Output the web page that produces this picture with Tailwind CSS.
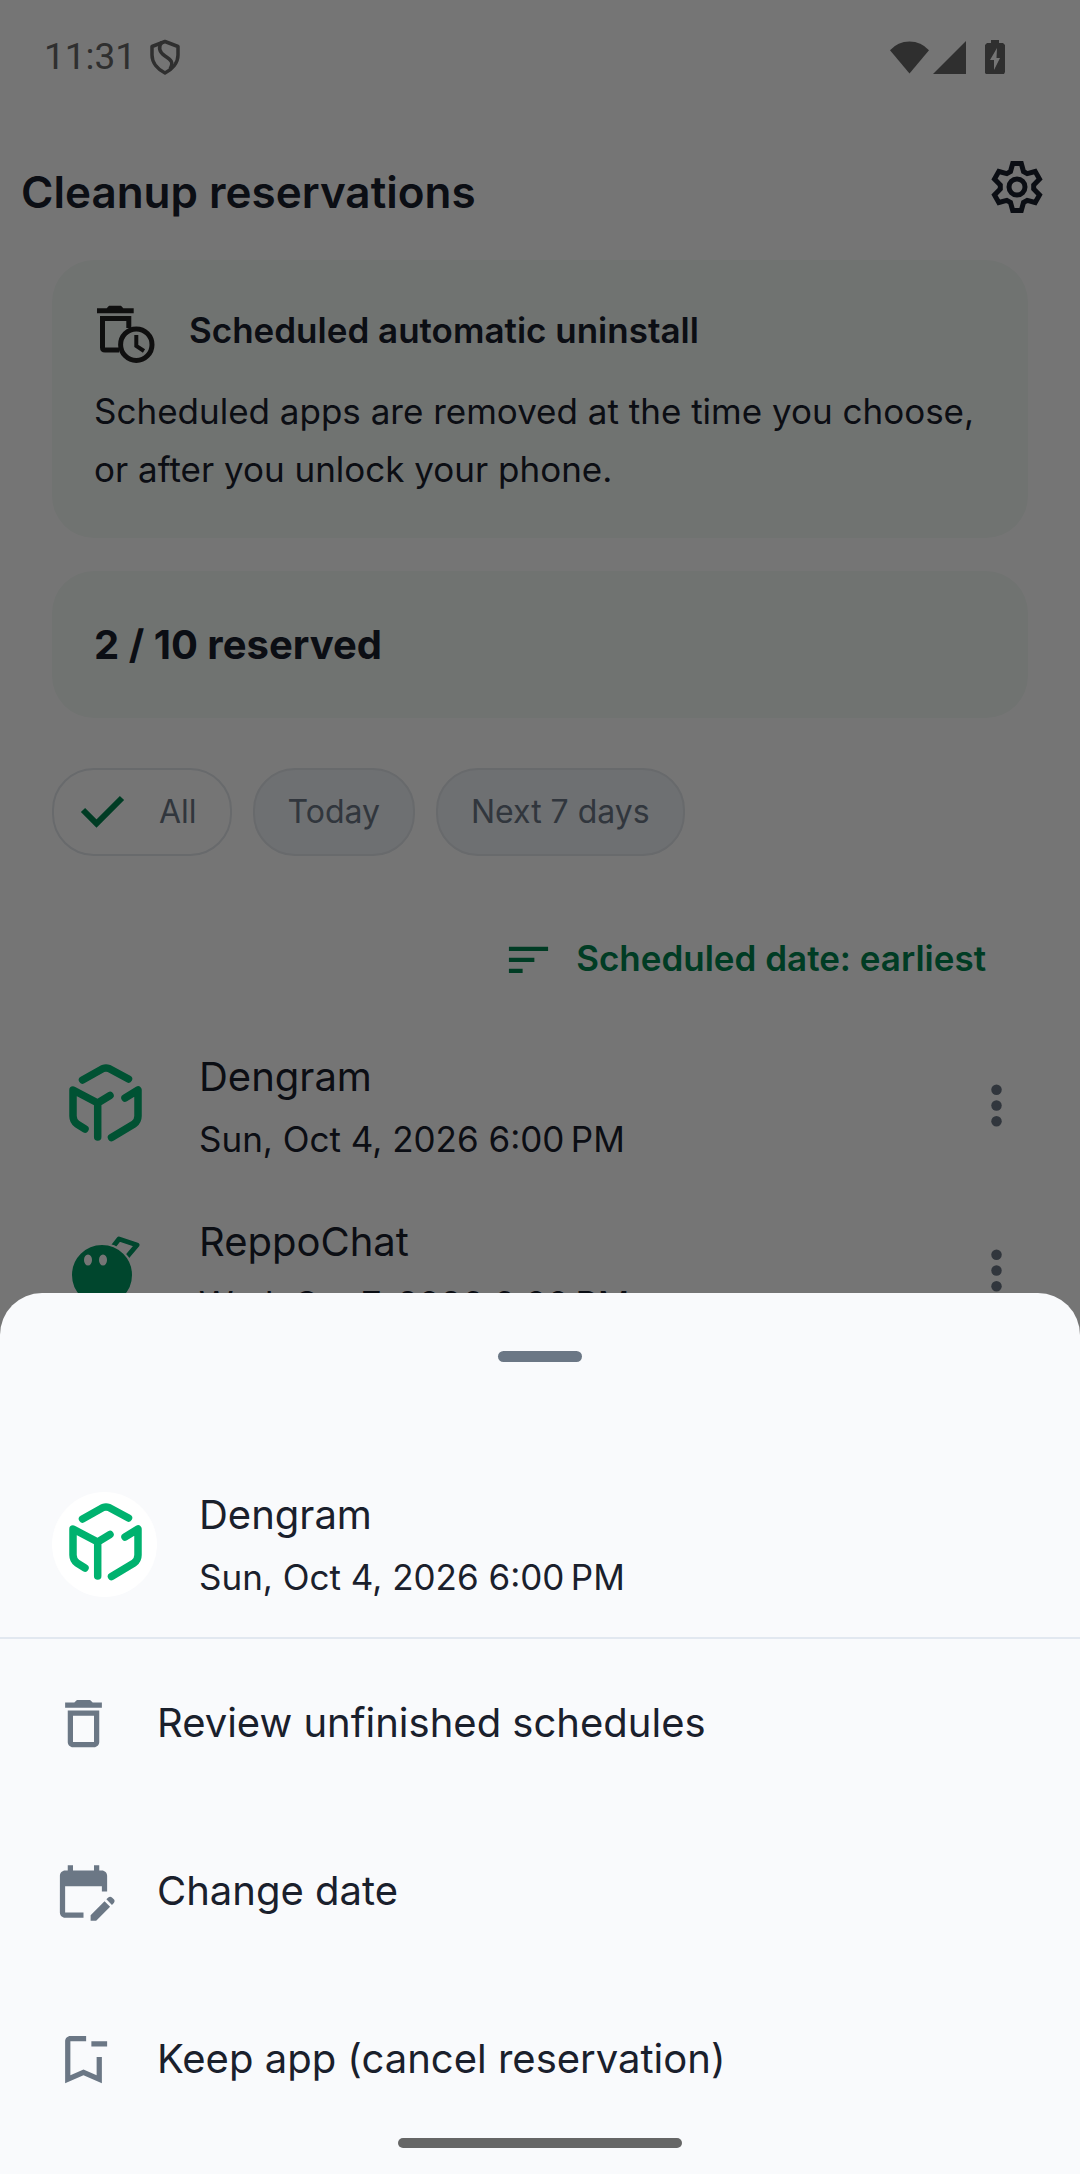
<!DOCTYPE html>
<html lang="en">

<head>
    <meta charset="UTF-8">
    <meta name="viewport" content="width=device-width, initial-scale=1.0">
    <title>Cleanup reservations</title>
    <script src="https://cdn.jsdelivr.net/npm/@tailwindcss/browser@4"></script>
</head>

<body class="bg-white font-['Inter',sans-serif] text-[#1a202c]">

    <div class="h-screen overflow-hidden">

        <!-- status bar -->
        <div class="flex items-center justify-between h-[113px] pl-11 pr-[75px] text-[#666]">
            <div class="flex items-center gap-3.5">
                <span class="font-['Roboto',sans-serif] text-[37px] leading-none">11:31</span>
                <svg class="w-[30px] h-9" viewBox="0 0 30 36" fill="none" stroke="currentColor" stroke-width="3.5" stroke-linejoin="round">
                    <path d="M15 2.500 L28 7.500 V16 C28 24 22 30.500 15 34 C8 30.500 2 24 2 16 V7.500 Z" />
                    <path d="M12 3 C8 8 9 13 15 17 C21 21 24 23 20 30" />
                </svg>
            </div>
            <div class="flex items-center">
                <svg class="w-[39px] h-[34px]" viewBox="0 0 40 34" fill="currentColor">
                    <path d="M20 34 L0 10 Q8 1 20 1 Q32 1 40 10 Z" />
                </svg>
                <svg class="w-[34px] h-[34px] ml-1" viewBox="0 0 34 34" fill="currentColor">
                    <path d="M33 1 V34 H0 Z" />
                </svg>
                <svg class="w-5 h-[34px] ml-[18px]" viewBox="0 0 20 34" fill="currentColor">
                    <path fill-rule="evenodd" d="M6 0 H14 V3 H18 L20 5 V32 L19 34 H1 L0 33 V5 L2 3 H6 Z M12 8 L5 20 H9 V30 L15 18 H11.500 Z" />
                </svg>
            </div>
        </div>

        <!-- app bar -->
        <header class="flex items-center justify-between h-[147px] pl-[21px] pr-[31px]">
            <h1 class="pt-2.5 text-[44px] font-semibold leading-[64px]">Cleanup reservations</h1>
            <button type="button" aria-label="Settings">
                <svg class="w-16 h-16" viewBox="-32 -32 64 64" fill="none" stroke="currentColor" stroke-width="5">
                    <path d="M-4.300 -23.500 H4.300 L6.500 -15.500 L10.200 -13.400 L18.200 -15.500 L22.500 -8 L16.700 -2.100 V2.100 L22.500 8 L18.200 15.500 L10.200 13.400 L6.500 15.500 L4.300 23.500 H-4.300 L-6.500 15.500 L-10.200 13.400 L-18.200 15.500 L-22.500 8 L-16.700 2.100 V-2.100 L-22.500 -8 L-18.200 -15.500 L-10.200 -13.400 L-6.500 -15.500 Z" />
                    <circle r="8" />
                </svg>
            </button>
        </header>

        <main class="px-[52px]">
            <section class="rounded-[42px] bg-[#f5faf7] px-[42px] py-10">
                <div class="flex items-start gap-8">
                    <svg class="w-[63px] h-[63px] text-[#222]" viewBox="0 0 63 63" fill="none" stroke="currentColor" stroke-width="5">
                        <path stroke="none" fill="currentColor" d="M3 8.300 H12.700 L15 5.700 H27 L29.300 8.300 H39.700 V13.300 H3 Z" />
                        <path d="M34.800 28 V18.500 H8.500 V47.500 Q8.500 50 11 50 H25" />
                        <circle cx="42.300" cy="44.700" r="15.700" />
                        <path stroke-width="4" d="M42.300 35 V46 L50 51" />
                    </svg>
                    <h2 class="text-[35px] font-semibold leading-[60px]">Scheduled automatic uninstall</h2>
                </div>
                <p class="mt-[19px] text-[35px] leading-[58px]">Scheduled apps are removed at the time you choose, or after you unlock your phone.</p>
            </section>

            <section class="mt-[33px] rounded-[42px] bg-[#f5faf7] px-[42px] py-[42px]">
                <h2 class="text-[40px] font-bold leading-[63px]">2 / 10 reserved</h2>
            </section>

            <div class="flex gap-[21px] mt-[50px] text-[32px] text-[#6b7785]">
                <button type="button" aria-pressed="true" class="flex items-center h-[88px] rounded-[42px] border-2 border-[#e2e6eb] pl-[26px] pr-[33px]">
                    <svg class="w-[47px] h-9 mr-8 text-[#008450]" viewBox="0 0 47 36" fill="none" stroke="currentColor" stroke-width="6">
                        <path d="M3 16 L16.500 29.500 L42 4" />
                    </svg>
                    All
                </button>
                <button type="button" class="h-[88px] rounded-[42px] border-2 border-[#e2e6eb] bg-[#eff3f8] px-[33px]">Today</button>
                <button type="button" class="h-[88px] rounded-[42px] border-2 border-[#e2e6eb] bg-[#eff3f8] px-[33px]">Next 7 days</button>
            </div>

            <div class="flex justify-end mt-[50px] pr-[42px]">
                <button type="button" class="flex items-center h-[105px] gap-6 text-[35px] font-semibold text-[#008450]">
                    <svg class="w-[47px] h-[47px]" viewBox="0 0 24 24" fill="currentColor">
                        <path d="M2 6H22V8.200H2Z M2 11.600H15V13.800H2Z M2 17.200H9V19.400H2Z" />
                    </svg>
                    Scheduled date: earliest
                </button>
            </div>

            <ul class="mt-3">
                <li class="flex items-center h-[165px]">
                    <svg class="w-[105px] h-[105px] text-[#00b26f]" viewBox="0 0 105 105" fill="none" stroke="currentColor" stroke-width="7.5" stroke-linecap="round" stroke-linejoin="round">
                        <path d="M30.500 27 L51 15.500 Q54 14.500 57 15.500 L76.500 26" />
                        <path d="M33 76 L25 71 Q21 68 21 63 V37 L45.700 50 L58 42.500 M45.700 50 V84" />
                        <path d="M73 45 L86 37 V63 Q86 68 82 71 L59.500 84.500" />
                    </svg>
                    <div class="flex-1 ml-[42px] pt-1 leading-[62px]">
                        <div class="text-[40px]">Dengram</div>
                        <div class="text-[35px]">Sun, Oct 4, 2026 6:00&#8239;PM</div>
                    </div>
                    <button type="button" aria-label="More options for Dengram">
                        <svg class="w-[63px] h-[63px] text-[#6b7785]" viewBox="0 0 24 24" fill="currentColor">
                            <circle cx="12" cy="6" r="2" />
                            <circle cx="12" cy="12" r="2" />
                            <circle cx="12" cy="18" r="2" />
                        </svg>
                    </button>
                </li>
                <li class="flex items-center h-[165px]">
                    <svg class="w-[105px] h-[105px] text-[#009862]" viewBox="0 0 105 105">
                        <path d="M60 30 L67 21 L85 27 L74 40" fill="none" stroke="currentColor" stroke-width="5" stroke-linejoin="round" />
                        <circle cx="50" cy="57" r="31" fill="currentColor" stroke="white" stroke-width="2" />
                        <ellipse cx="36" cy="42" rx="4" ry="5.5" fill="white" />
                        <ellipse cx="51" cy="42" rx="4" ry="5.5" fill="white" />
                    </svg>
                    <div class="flex-1 ml-[42px] pt-1 leading-[62px]">
                        <div class="text-[40px]">ReppoChat</div>
                        <div class="text-[35px]">Wed, Oct 7, 2026 6:00&#8239;PM</div>
                    </div>
                    <button type="button" aria-label="More options for ReppoChat">
                        <svg class="w-[63px] h-[63px] text-[#6b7785]" viewBox="0 0 24 24" fill="currentColor">
                            <circle cx="12" cy="6" r="2" />
                            <circle cx="12" cy="12" r="2" />
                            <circle cx="12" cy="18" r="2" />
                        </svg>
                    </button>
                </li>
            </ul>
        </main>
    </div>

    <!-- scrim -->
    <div class="fixed inset-0 bg-black/54"></div>

    <!-- bottom sheet -->
    <div role="dialog" aria-label="Dengram" class="fixed inset-x-0 bottom-0 pb-[31px] rounded-t-[42px] bg-[#f9fafc]">
        <div class="flex justify-center h-[126px] pt-[58px]">
            <div class="w-[84px] h-[11px] rounded-full bg-[#6b7785]"></div>
        </div>
        <div class="flex items-center h-[220px] px-[52px] pt-8 border-b-2 border-[#e2e8f0]">
            <svg class="w-[105px] h-[105px] rounded-full bg-white text-[#00b26f]" viewBox="0 0 105 105" fill="none" stroke="currentColor" stroke-width="7.5" stroke-linecap="round" stroke-linejoin="round">
                <path d="M30.500 27 L51 15.500 Q54 14.500 57 15.500 L76.500 26" />
                <path d="M33 76 L25 71 Q21 68 21 63 V37 L45.700 50 L58 42.500 M45.700 50 V84" />
                <path d="M73 45 L86 37 V63 Q86 68 82 71 L59.500 84.500" />
            </svg>
            <div class="ml-[42px] pt-1 leading-[62px]">
                <div class="text-[40px]">Dengram</div>
                <div class="text-[35px]">Sun, Oct 4, 2026 6:00&#8239;PM</div>
            </div>
        </div>
        <button type="button" class="flex items-center w-full h-[168px] px-[52px] gap-[42px] text-left text-[40px]">
            <svg class="w-[63px] h-[63px] text-[#6b7785]" viewBox="0 0 24 24" fill="currentColor">
                <path d="M6 19c0 1.100.9 2 2 2h8c1.100 0 2-.9 2-2V7H6v12zM8 9h8v10H8V9zM15.500 4l-1-1h-5l-1 1H5v2h14V4z" />
            </svg>
            Review unfinished schedules
        </button>
        <button type="button" class="flex items-center w-full h-[168px] px-[52px] gap-[42px] text-left text-[40px]">
            <svg class="w-[63px] h-[63px] text-[#6b7785]" viewBox="0 0 24 24" fill="currentColor">
                <path d="M5 10h14v2h2V6c0-1.100-.9-2-2-2h-1V2h-2v2H8V2H6v2H5c-1.110 0-1.990.9-1.990 2L3 20c0 1.100.89 2 2 2h7v-2H5V10zm17.840 4.280.71.71c.39.39.39 1.020 0 1.410l-.71.71-2.120-2.120.71-.71c.39-.39 1.020-.39 1.410 0zm-2.830 1.420 2.120 2.120-5.300 5.300h-2.120v-2.120l5.300-5.300z" />
            </svg>
            Change date
        </button>
        <button type="button" class="flex items-center w-full h-[168px] px-[52px] gap-[42px] text-left text-[40px]">
            <svg class="w-[63px] h-[63px] text-[#6b7785]" viewBox="0 0 24 24" fill="currentColor">
                <path d="M17 11v6.970l-5-2.140-5 2.140V5h6V3H7c-1.100 0-2 .9-2 2v16l7-3 7 3V11h-2zm4-4h-6V5h6v2z" />
            </svg>
            Keep app (cancel reservation)
        </button>
    </div>

    <!-- gesture bar -->
    <div class="fixed inset-x-0 bottom-[26px] flex justify-center">
        <div class="w-[284px] h-[10px] rounded-full bg-[#666]"></div>
    </div>

</body>

</html>
